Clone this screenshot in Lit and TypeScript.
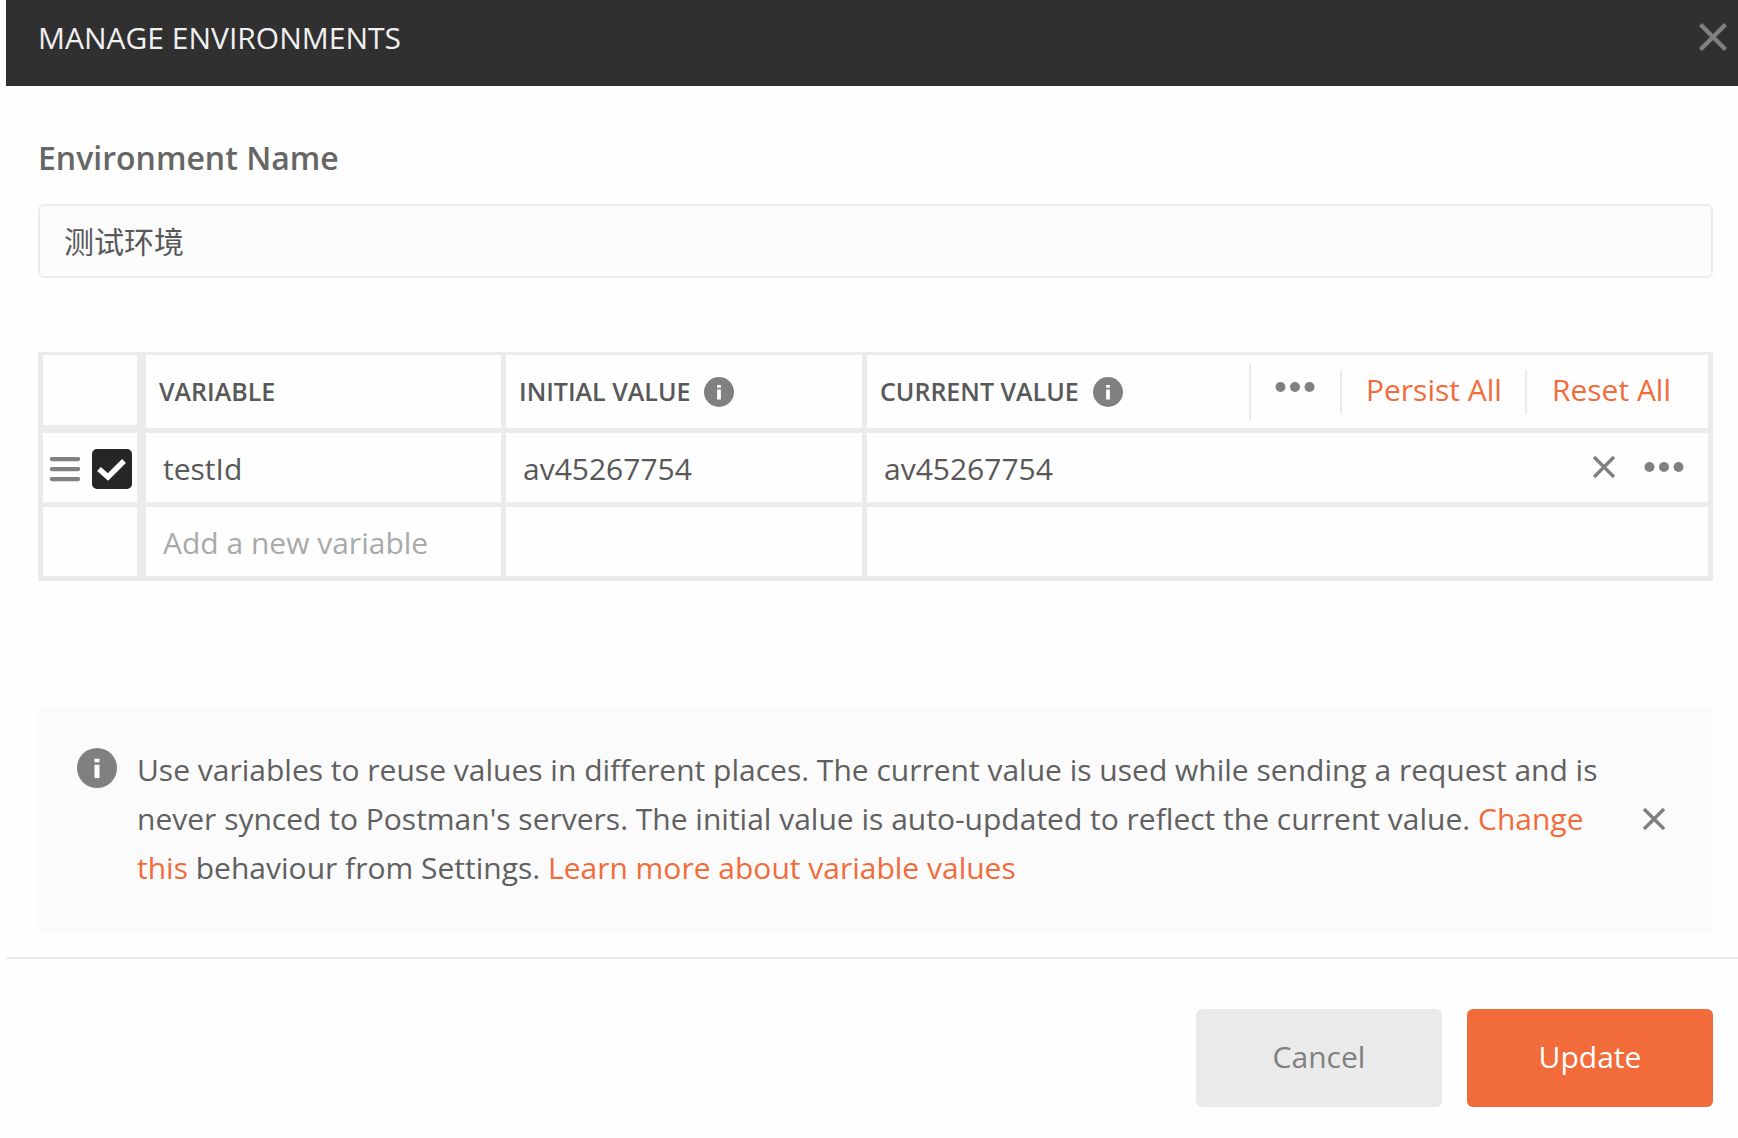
import { LitElement, html, svg, css } from "lit";
import { customElement, property, state } from "lit/decorators.js";

type IconName = "close" | "dots" | "info" | "drag";

const shapes = {
  close: svg`<path d="M2 2 L22 22 M22 2 L2 22" fill="none" stroke="currentColor" stroke-width="3.4"/>`,
  dots: svg`<g fill="currentColor"><circle cx="3.3" cy="12" r="3"/><circle cx="12" cy="12" r="3"/><circle cx="20.7" cy="12" r="3"/></g>`,
  info: svg`<circle cx="12" cy="12" r="12" fill="currentColor"/><path d="M10.5 6.4h3v2.2h-3z M10.5 10h3v8h-3z" fill="#fff"/>`,
  drag: svg`<path d="M1.500 4h21 M1.500 12h21 M1.500 20h21" stroke="currentColor" stroke-width="3.4" stroke-linecap="round"/>`,
};

@customElement("env-icon")
class EnvIcon extends LitElement {
  @property() name: IconName = "close";

  static styles = css`
    :host { display: block; flex: none; width: 24px; height: 24px; }
    svg { display: block; width: 100%; height: 100%; overflow: visible; }
  `;

  render() {
    return html`<svg viewBox="0 0 24 24" aria-hidden="true">${shapes[this.name]}</svg>`;
  }
}

interface Variable {
  key: string;
  initial: string;
  current: string;
  enabled: boolean;
}

@customElement("app-root")
class AppRoot extends LitElement {
  @state() private variables: Variable[] = [
    { key: "testId", initial: "av45267754", current: "av45267754", enabled: true },
  ];

  static styles = css`
    :host {
      display: block;
      background: #fefefe;
      color: #585858;
      font: 30px/49px "Open Sans", "Noto Sans CJK SC", sans-serif;
    }
    *, *::before, *::after { box-sizing: border-box; }
    button, input { font: inherit; color: inherit; margin: 0; }
    button { border: 0; padding: 0; background: none; cursor: pointer; }
    a { color: #f26b3a; text-decoration: none; }

    .modal { margin-left: 6px; }
    .header {
      display: flex;
      align-items: center;
      justify-content: space-between;
      height: 86px;
      padding: 0 10px 12px 32px;
      background: #303030;
      color: #f0f0f0;
    }
    .title { margin: 0; font-size: 30px; font-weight: 400; }
    .close { color: #808080; }
    .close env-icon { width: 30px; height: 30px; }

    .body { padding: 47px 25px 24px 32px; }
    .label { display: block; font-size: 32px; font-weight: 600; color: #666; }
    .name {
      display: block;
      width: 100%;
      height: 74px;
      margin-top: 22px;
      padding: 0 24px 2px;
      border: 2px solid #ececec;
      border-radius: 6px;
      background: #fbfbfb;
    }

    .vars {
      width: 100%;
      margin-top: 74px;
      table-layout: fixed;
      border-collapse: separate;
      border-spacing: 0;
      border-top: 3px solid #ebebeb;
    }
    .col-tools { width: 108px; }
    .col-key { width: 360px; }
    .col-initial { width: 361px; }
    th, td {
      height: 74px;
      padding: 0;
      border: solid #ebebeb;
      border-width: 0 5px 5px 0;
      text-align: left;
      vertical-align: middle;
    }
    th { height: 78px; font-size: 25px; font-weight: 600; }
    .tools { border-left-width: 5px; border-right-width: 9px; }
    .corner { border-bottom-width: 8px; }
    .head { display: flex; align-items: center; gap: 14px; padding-left: 13px; }
    .head env-icon { width: 30px; height: 30px; color: #808080; }
    .actions { display: flex; align-items: center; margin-left: auto; font-size: 30px; font-weight: 400; line-height: 40px; }
    .actions button { height: 44px; border-left: 2px solid #ebebeb; color: #f26b3a; }
    .actions .more { height: 56px; padding: 0 25px 10px 24px; color: #808080; }
    .actions .persist { padding: 0 23px 4px 24px; }
    .actions .reset { padding: 0 37px 4px 25px; }
    .handle { display: flex; align-items: center; gap: 12px; padding: 2px 0 0 7px; color: #808080; }
    .handle env-icon { width: 30px; height: 30px; }
    .check {
      appearance: none;
      width: 40px;
      height: 40px;
      border: 2px solid #262626;
      border-radius: 5px;
      background: #fff;
    }
    .check:checked {
      background: #262626 url("data:image/svg+xml,%3Csvg xmlns='http://www.w3.org/2000/svg' viewBox='0 0 36 36'%3E%3Cpath d='M5 18l9 8L30 10' fill='none' stroke='white' stroke-width='5.500'/%3E%3C/svg%3E") center / 100% no-repeat;
    }
    .cell { display: flex; align-items: center; padding-top: 2px; }
    .field {
      flex: 1;
      min-width: 0;
      width: 100%;
      height: 60px;
      padding: 0 17px;
      border: 0;
      background: none;
    }
    .field::placeholder { color: #a9a9a9; opacity: 1; }
    .row-actions { display: flex; align-items: center; gap: 28px; padding: 0 24px 4px 0; color: #808080; }
    .head .actions .dots, .row-actions .dots { width: 40px; height: 40px; }

    .notice {
      display: flex;
      align-items: center;
      margin-top: 125px;
      padding: 39px 47px 41px 39px;
      background: #fbfbfb;
      color: #606060;
    }
    .notice-icon { align-self: flex-start; width: 40px; height: 40px; margin: 3px 20px 0 0; color: #808080; }
    .notice-text { flex: 1; margin: 0; padding-right: 36px; }
    .dismiss { color: #808080; }

    .footer {
      display: flex;
      justify-content: flex-end;
      gap: 25px;
      padding: 50px 25px 31px;
      border-top: 2px solid #ececec;
    }
    .btn { width: 246px; height: 98px; padding-bottom: 4px; border-radius: 6px; }
    .cancel { background: #eaeaea; color: #808080; }
    .update { background: #f26b3a; color: #fff; }
  `;

  private toggle(index: number) {
    this.variables = this.variables.map((v, i) => (i === index ? { ...v, enabled: !v.enabled } : v));
  }

  private remove(index: number) {
    this.variables = this.variables.filter((_, i) => i !== index);
  }

  private renderRow(v: Variable, i: number) {
    return html`
      <tr>
        <td class="tools">
          <div class="handle">
            <env-icon name="drag"></env-icon>
            <input class="check" type="checkbox" aria-label="Enabled" .checked=${v.enabled} @change=${() => this.toggle(i)} />
          </div>
        </td>
        <td><div class="cell"><input class="field" aria-label="Variable" .value=${v.key} /></div></td>
        <td><div class="cell"><input class="field" aria-label="Initial value" .value=${v.initial} /></div></td>
        <td>
          <div class="cell">
            <input class="field" aria-label="Current value" .value=${v.current} />
            <div class="row-actions">
              <button aria-label="Remove" @click=${() => this.remove(i)}><env-icon name="close"></env-icon></button>
              <button aria-label="More"><env-icon class="dots" name="dots"></env-icon></button>
            </div>
          </div>
        </td>
      </tr>
    `;
  }

  render() {
    return html`
      <main class="modal">
        <header class="header">
          <h1 class="title">MANAGE ENVIRONMENTS</h1>
          <button class="close" aria-label="Close"><env-icon name="close"></env-icon></button>
        </header>
        <section class="body">
          <label class="label" for="env-name">Environment Name</label>
          <input class="name" id="env-name" .value=${"测试环境"} />
          <table class="vars">
            <colgroup>
              <col class="col-tools" /><col class="col-key" /><col class="col-initial" /><col />
            </colgroup>
            <thead>
              <tr>
                <th class="tools corner"></th>
                <th><div class="head">VARIABLE</div></th>
                <th><div class="head">INITIAL VALUE<env-icon name="info"></env-icon></div></th>
                <th>
                  <div class="head">
                    CURRENT VALUE<env-icon name="info"></env-icon>
                    <div class="actions">
                      <button class="more" aria-label="More"><env-icon class="dots" name="dots"></env-icon></button>
                      <button class="persist">Persist All</button>
                      <button class="reset">Reset All</button>
                    </div>
                  </div>
                </th>
              </tr>
            </thead>
            <tbody>
              ${this.variables.map((v, i) => this.renderRow(v, i))}
              <tr>
                <td class="tools"></td>
                <td><div class="cell"><input class="field" aria-label="New variable" placeholder="Add a new variable" /></div></td>
                <td></td>
                <td></td>
              </tr>
            </tbody>
          </table>
          <aside class="notice">
            <env-icon class="notice-icon" name="info"></env-icon>
            <p class="notice-text">
              Use variables to reuse values in different places. The current value is used while sending a request and is
              never synced to Postman's servers. The initial value is auto-updated to reflect the current value.
              <a href="#settings">Change this</a> behaviour from Settings.
              <a href="#learn">Learn more about variable values</a>
            </p>
            <button class="dismiss" aria-label="Dismiss"><env-icon name="close"></env-icon></button>
          </aside>
        </section>
        <footer class="footer">
          <button class="btn cancel">Cancel</button>
          <button class="btn update">Update</button>
        </footer>
      </main>
    `;
  }
}
